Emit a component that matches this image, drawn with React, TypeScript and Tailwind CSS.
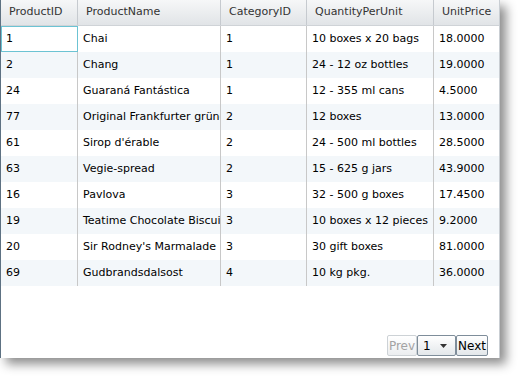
import React from 'react';

const ROWS: [string, string, string, string, string][] = [
  ['1', 'Chai', '1', '10 boxes x 20 bags', '18.0000'],
  ['2', 'Chang', '1', '24 - 12 oz bottles', '19.0000'],
  ['24', 'Guaraná Fantástica', '1', '12 - 355 ml cans', '4.5000'],
  ['77', 'Original Frankfurter grüne Soße', '2', '12 boxes', '13.0000'],
  ['61', "Sirop d'érable", '2', '24 - 500 ml bottles', '28.5000'],
  ['63', 'Vegie-spread', '2', '15 - 625 g jars', '43.9000'],
  ['16', 'Pavlova', '3', '32 - 500 g boxes', '17.4500'],
  ['19', 'Teatime Chocolate Biscuits', '3', '10 boxes x 12 pieces', '9.2000'],
  ['20', "Sir Rodney's Marmalade", '3', '30 gift boxes', '81.0000'],
  ['69', 'Gudbrandsdalsost', '4', '10 kg pkg.', '36.0000'],
];

const HEADERS = ['ProductID', 'ProductName', 'CategoryID', 'QuantityPerUnit', 'UnitPrice'];
const WIDTHS = ['w-[77px]', 'w-[143px]', 'w-[86px]', 'w-[127px]', 'flex-1'];

const App: React.FC = () => {
  return (
    <div className="w-[520px] h-[378px] bg-white font-['DejaVu_Sans',sans-serif] text-[11px]">
      <div className="w-[500px] h-[358px] bg-white border-l border-l-[#5d7182] border-r border-r-[#c9ced3] shadow-[6px_6px_10px_rgba(0,0,0,0.45)] flex flex-col overflow-hidden">
        <div className="flex h-[26px] bg-gradient-to-b from-[#f6f7f8] to-[#e1e4e7] border-b border-[#cfd3d7] text-[#333]">
          {HEADERS.map((h, i) => (
            <div
              key={h}
              className={`${WIDTHS[i]} shrink-0 flex items-center pl-2 whitespace-nowrap overflow-hidden ${i < 4 ? 'border-r border-[#c6cacf]' : ''}`}
            >
              {h}
            </div>
          ))}
        </div>
        {ROWS.map((row, r) => (
          <div key={r} className={`flex h-[26px] text-black ${r % 2 === 1 ? 'bg-[#f3f7fa]' : 'bg-white'}`}>
            {row.map((c, i) => (
              <div
                key={i}
                className={`${WIDTHS[i]} shrink-0 flex items-center pl-[5px] pt-px whitespace-nowrap overflow-hidden ${i < 4 ? 'border-r border-[#c8c8c8]' : ''} ${r === 0 && i === 0 ? 'outline outline-1 -outline-offset-1 outline-[#6cc3d3]' : ''}`}
              >
                {c}
              </div>
            ))}
          </div>
        ))}
        <div className="flex-1" />
        <div className="flex justify-end pr-[11px] pb-[2px] h-[23px] text-[12px]">
          <button className="h-[21px] w-[30px] rounded-[2px] border border-[#cdd2d6] bg-gradient-to-b from-white to-[#eceef0] text-[#a3a3a3] flex items-center justify-center">
            Prev
          </button>
          <button className="h-[21px] w-[39px] rounded-[2px] border border-[#7e8d9a] bg-gradient-to-b from-white to-[#e3e7ea] text-black flex items-center pl-[5px] gap-[9px]">
            <span>1</span>
            <svg width="7" height="4" viewBox="0 0 7 4"><path d="M0 0h7L3.5 4z" fill="#333" /></svg>
          </button>
          <button className="h-[21px] w-[32px] rounded-[2px] border border-[#7e8d9a] bg-gradient-to-b from-white to-[#e3e7ea] text-black flex items-center justify-center">
            Next
          </button>
        </div>
      </div>
    </div>
  );
};

export default App;
